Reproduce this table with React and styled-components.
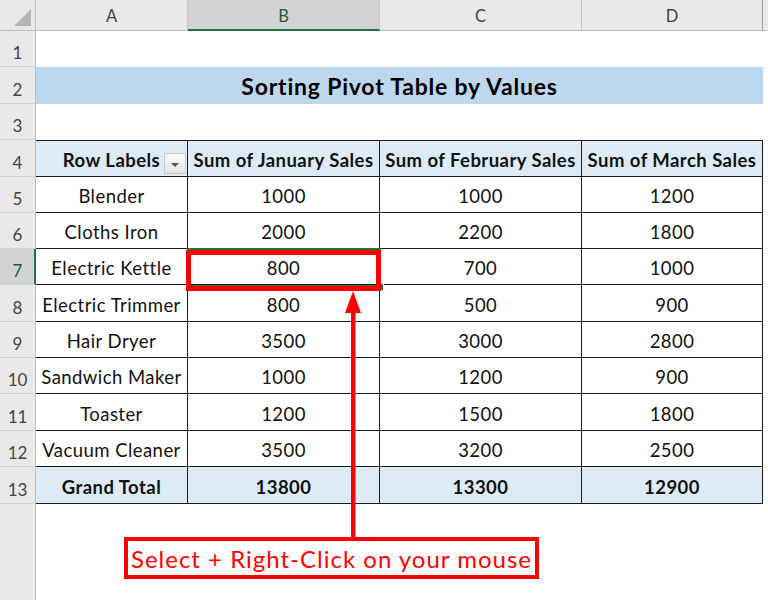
import React from "react";
import styled, { createGlobalStyle, css } from "styled-components";

const Global = createGlobalStyle`
  html, body { margin: 0; padding: 0; background: #fff; overflow: hidden; }
  #root { width: 768px; height: 600px; }
`;

const FONT = `Lato, "Open Sans", "Liberation Sans", sans-serif`;

const Sheet = styled.div`
  position: relative;
  display: grid;
  grid-template-columns: 36px 152px 192px 202px 181px 1fr;
  grid-template-rows: 31px 36px 37px 36px 37px 36px 36px 36px 37px 36px 36px 37px 36px 37px 1fr;
  width: 768px;
  height: 600px;
  background: #fff;
  font-family: ${FONT};
  color: #000;
`;

const Corner = styled.div`
  box-sizing: border-box;
  background: #e9e9e9;
  border-right: 1px solid #c4c4c4;
  border-bottom: 1px solid #bdbdbd;
  display: flex;
  justify-content: flex-end;
  align-items: flex-end;
  padding: 0 4px 4px 0;
`;

const Triangle = styled.div`
  width: 0;
  height: 0;
  border-left: 17px solid transparent;
  border-bottom: 17px solid #b5b5b5;
`;

const ColHead = styled.div`
  box-sizing: border-box;
  background: ${(p) => (p.$active ? "#d3d3d3" : "#e9e9e9")};
  border-right: 1px solid ${(p) => (p.$edge ? "#9e9e9e" : "#c6c6c6")};
  border-bottom: ${(p) => (p.$active ? "2px solid #217346" : "1px solid #bdbdbd")};
  display: flex;
  align-items: center;
  justify-content: center;
  padding-top: ${(p) => (p.$active ? "3px" : "2px")};
  font-size: 16.5px;
  color: ${(p) => (p.$active ? "#1f5c3a" : "#444")};
`;

const ColFill = styled.div`
  background: #e9e9e9;
  border-bottom: 1px solid #bdbdbd;
  box-sizing: border-box;
`;

const RowHead = styled.div`
  box-sizing: border-box;
  background: ${(p) => (p.$active ? "#d3d3d3" : "#e9e9e9")};
  border-right: ${(p) => (p.$active ? "2px solid #217346" : "1px solid #bdbdbd")};
  border-bottom: ${(p) => (p.$last ? "none" : "1px solid #d0d0d0")};
  display: flex;
  align-items: flex-end;
  justify-content: center;
  padding-bottom: 3px;
  padding-left: ${(p) => (p.$active ? "1px" : "0")};
  font-size: 17px;
  color: ${(p) => (p.$active ? "#1f5c3a" : "#444")};
`;

const Blank = styled.div`
  grid-column: span ${(p) => p.$span || 1};
  background: #fff;
`;

const Title = styled.div`
  grid-column: span 4;
  background: #bdd7ee;
  display: flex;
  align-items: center;
  justify-content: center;
  padding-top: 1px;
  font-weight: 700;
  font-size: 23px;
  letter-spacing: 0.8px;
  color: #000;
`;

const Cell = styled.div`
  position: relative;
  box-sizing: border-box;
  display: flex;
  align-items: center;
  justify-content: center;
  padding-top: 3px;
  font-size: 18.5px;
  letter-spacing: 0.45px;
  color: #111;
  background: ${(p) => (p.$shade ? "#ddebf7" : "#fff")};
  font-weight: ${(p) => (p.$bold ? 700 : 400)};
  border-right: 1px solid #1a1a1a;
  border-bottom: 1px solid #1a1a1a;
  ${(p) =>
    p.$top &&
    css`
      border-top: 1px solid #1a1a1a;
    `}
  white-space: nowrap;
`;

const FilterButton = styled.div`
  position: absolute;
  right: 1px;
  top: 12px;
  width: 22px;
  height: 21px;
  box-sizing: border-box;
  border: 1px solid #c9c9c9;
  background: linear-gradient(#fbfbfb, #e4e4e4);
  display: flex;
  align-items: center;
  justify-content: center;
  padding-top: 3px;
`;

const DownTri = styled.div`
  width: 0;
  height: 0;
  border-left: 4px solid transparent;
  border-right: 4px solid transparent;
  border-top: 4px solid #555;
`;

const Selection = styled.div`
  position: absolute;
  left: 187px;
  top: 248px;
  width: 194px;
  height: 39px;
  box-sizing: border-box;
  border: 2px solid #217346;
`;

const Handle = styled.div`
  position: absolute;
  left: 376px;
  top: 283px;
  width: 6px;
  height: 6px;
  background: #217346;
  border: 1px solid #fff;
`;

const RedBox = styled.div`
  position: absolute;
  left: 186px;
  top: 250px;
  width: 195px;
  height: 41px;
  box-sizing: border-box;
  border: 5px solid #ff0000;
`;

const ArrowSvg = styled.svg`
  position: absolute;
  left: 342px;
  top: 290px;
`;

const Label = styled.div`
  position: absolute;
  left: 124px;
  top: 537px;
  width: 415px;
  height: 42px;
  box-sizing: border-box;
  border: 4px solid #ff0000;
  background: #fff;
  display: flex;
  align-items: center;
  justify-content: center;
  padding-top: 1px;
  font-size: 24px;
  letter-spacing: 1px;
  color: #ff0000;
  white-space: nowrap;
`;

const data = [
  ["Blender", 1000, 1000, 1200],
  ["Cloths Iron", 2000, 2200, 1800],
  ["Electric Kettle", 800, 700, 1000],
  ["Electric Trimmer", 800, 500, 900],
  ["Hair Dryer", 3500, 3000, 2800],
  ["Sandwich Maker", 1000, 1200, 900],
  ["Toaster", 1200, 1500, 1800],
  ["Vacuum Cleaner", 3500, 3200, 2500],
];

export default function App() {
  return (
    <>
      <Global />
      <Sheet>
        <Corner>
          <Triangle />
        </Corner>
        <ColHead>A</ColHead>
        <ColHead $active>B</ColHead>
        <ColHead>C</ColHead>
        <ColHead $edge>D</ColHead>
        <ColFill />

        <RowHead>1</RowHead>
        <Blank $span={5} />

        <RowHead>2</RowHead>
        <Title>Sorting Pivot Table by Values</Title>
        <Blank />

        <RowHead>3</RowHead>
        <Blank $span={5} />

        <RowHead>4</RowHead>
        <Cell $shade $bold $top>
          Row Labels
          <FilterButton>
            <DownTri />
          </FilterButton>
        </Cell>
        <Cell $shade $bold $top>Sum of January Sales</Cell>
        <Cell $shade $bold $top>Sum of February Sales</Cell>
        <Cell $shade $bold $top>Sum of March Sales</Cell>
        <Blank />

        {data.map((r, i) => (
          <React.Fragment key={r[0]}>
            <RowHead $active={i === 2}>{i + 5}</RowHead>
            <Cell>{r[0]}</Cell>
            <Cell>{r[1]}</Cell>
            <Cell>{r[2]}</Cell>
            <Cell>{r[3]}</Cell>
            <Blank />
          </React.Fragment>
        ))}

        <RowHead>13</RowHead>
        <Cell $shade $bold>Grand Total</Cell>
        <Cell $shade $bold>13800</Cell>
        <Cell $shade $bold>13300</Cell>
        <Cell $shade $bold>12900</Cell>
        <Blank />

        <RowHead $last />
        <Blank $span={5} />

        <Selection />
        <Handle />
        <RedBox />
        <ArrowSvg width="22" height="250" viewBox="0 0 22 250">
          <polygon points="11,1 3,23 19,23" fill="#ff0000" />
          <rect x="9" y="20" width="4.5" height="230" fill="#ff0000" />
        </ArrowSvg>
        <Label>Select + Right-Click on your mouse</Label>
      </Sheet>
    </>
  );
}
